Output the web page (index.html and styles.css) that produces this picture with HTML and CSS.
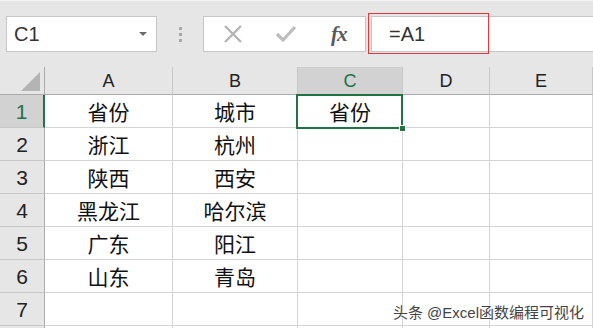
FILE: index.html
```html
<!DOCTYPE html>
<html lang="zh">
<head>
<meta charset="utf-8">
<link rel="stylesheet" href="styles.css">
</head>
<body>
<div class="app">
  <div class="toolbar">
    <div class="namebox">
      <span class="name">C1</span>
      <span class="caret"></span>
    </div>
    <div class="dots"><i></i><i></i><i></i></div>
    <div class="fnbox">
      <svg class="ic" width="20" height="20" viewBox="0 0 20 20"><path d="M2 2 L18 18 M18 2 L2 18" stroke="#b5b5b5" stroke-width="2.4" fill="none"/></svg>
      <svg class="ic" width="22" height="20" viewBox="0 0 22 20"><path d="M2 10 L8 16 L20 3" stroke="#bdbdbd" stroke-width="3.2" fill="none"/></svg>
      <span class="fx">fx</span>
    </div>
    <div class="formula">
      <div class="input">=A1</div>
      <div class="mark"></div>
    </div>
  </div>
  <div class="sheet">
    <div class="corner"><span class="tri"></span></div>
    <div class="ch">A</div><div class="ch">B</div><div class="ch sel">C</div><div class="ch">D</div><div class="ch">E</div>

    <div class="rh sel">1</div><div class="c">省份</div><div class="c">城市</div><div class="c active">省份<span class="handle"></span></div><div class="c"></div><div class="c"></div>
    <div class="rh">2</div><div class="c">浙江</div><div class="c">杭州</div><div class="c"></div><div class="c"></div><div class="c"></div>
    <div class="rh">3</div><div class="c">陕西</div><div class="c">西安</div><div class="c"></div><div class="c"></div><div class="c"></div>
    <div class="rh">4</div><div class="c">黑龙江</div><div class="c">哈尔滨</div><div class="c"></div><div class="c"></div><div class="c"></div>
    <div class="rh">5</div><div class="c">广东</div><div class="c">阳江</div><div class="c"></div><div class="c"></div><div class="c"></div>
    <div class="rh">6</div><div class="c">山东</div><div class="c">青岛</div><div class="c"></div><div class="c"></div><div class="c"></div>
    <div class="rh">7</div><div class="c"></div><div class="c"></div><div class="c"></div><div class="c"></div><div class="c"></div>
    <div class="rh"></div><div class="c"></div><div class="c"></div><div class="c"></div><div class="c"></div><div class="c"></div>
  </div>
  <div class="watermark">头条 @Excel函数编程可视化</div>
</div>
</body>
</html>
```

FILE: styles.css
```css
* { box-sizing: border-box; }
html, body { margin: 0; padding: 0; }
body {
  width: 593px;
  height: 328px;
  overflow: hidden;
  background: #e6e6e6;
  font-family: "Liberation Sans", "Noto Sans CJK SC", sans-serif;
}
.app {
  position: relative;
  width: 593px;
  height: 328px;
  overflow: hidden;
}
.toolbar {
  height: 67px;
  display: flex;
  align-items: flex-start;
  padding-top: 16px;
  padding-left: 6px;
  border-top: 1px solid #f2f2f2;
}
.namebox {
  width: 151px;
  height: 36px;
  margin-top: -1px;
  background: #fff;
  border: 1px solid #c6c6c6;
  display: flex;
  align-items: center;
  justify-content: space-between;
  padding: 0 9px 0 7px;
}
.name {
  font-size: 20px;
  color: #333;
}
.caret {
  width: 0; height: 0;
  border-left: 4px solid transparent;
  border-right: 4px solid transparent;
  border-top: 4px solid #6b6b6b;
}
.dots {
  width: 46px;
  height: 36px;
  margin-top: -1px;
  display: flex;
  flex-direction: column;
  align-items: center;
  justify-content: center;
  gap: 3px;
}
.dots i {
  width: 3px; height: 3px;
  background: #a8a8a8;
}
.fnbox {
  width: 163px;
  height: 36px;
  margin-top: -1px;
  background: #fff;
  border: 1px solid #c6c6c6;
  display: flex;
  align-items: center;
  padding-left: 19px;
}
.fnbox .ic { margin-right: 32px; }
.fnbox .ic + .ic { margin-right: 34px; }
.fx {
  font-family: "Liberation Serif", serif;
  font-style: italic;
  font-weight: bold;
  font-size: 21px;
  color: #5a5a5a;
  letter-spacing: -1px;
}
.formula {
  position: relative;
  flex: 1;
  height: 36px;
  margin-top: -1px;
  margin-left: 5px;
}
.input {
  height: 36px;
  background: #fff;
  border: 1px solid #c6c6c6;
  border-right: none;
  padding-left: 17px;
  font-size: 20px;
  line-height: 34px;
  color: #333;
}
.mark {
  position: absolute;
  left: -3px;
  top: -3px;
  width: 121px;
  height: 41px;
  border: 1px solid #e0383b;
}
.sheet {
  display: grid;
  grid-template-columns: 45px 128px 125px 105px 87px 1fr;
  grid-template-rows: 28px repeat(8, 33px);
  background: #fff;
}
.corner {
  background: #e6e6e6;
  border-right: 1px solid #ababab;
  border-bottom: 1px solid #ababab;
  position: relative;
}
.tri {
  position: absolute;
  left: 21px;
  top: 5px;
  width: 0; height: 0;
  border-left: 19px solid transparent;
  border-bottom: 19px solid #b4b4b4;
}
.ch {
  background: #e6e6e6;
  border-right: 1px solid #c8c8c8;
  border-bottom: 1px solid #ababab;
  display: flex;
  align-items: center;
  justify-content: center;
  font-size: 18px;
  color: #222;
  padding-top: 2px;
}
.ch.sel {
  background: #d2d2d2;
  color: #217346;
}
.rh {
  background: #e6e6e6;
  border-right: 1px solid #ababab;
  border-bottom: 1px solid #c8c8c8;
  display: flex;
  align-items: center;
  justify-content: center;
  font-size: 21px;
  color: #222;
  padding-top: 2px;
}
.rh.sel {
  background: #d2d2d2;
  color: #217346;
  border-right: 2px solid #217346;
}
.c {
  border-right: 1px solid #d4d4d4;
  border-bottom: 1px solid #d4d4d4;
  display: flex;
  align-items: center;
  justify-content: center;
  font-family: "Noto Sans CJK SC", sans-serif;
  font-size: 21px;
  color: #111;
  padding-top: 0;
}
.c.active {
  position: relative;
}
.c.active::after {
  content: "";
  position: absolute;
  left: -2px;
  top: -1px;
  right: -1px;
  bottom: -2px;
  border: 2px solid #217346;
}
.handle {
  position: absolute;
  right: -4px;
  bottom: -5px;
  width: 7px;
  height: 7px;
  background: #217346;
  border: 1px solid #fff;
  z-index: 2;
}
.watermark {
  position: absolute;
  right: 9px;
  bottom: 6px;
  font-family: "Liberation Sans", "Noto Sans CJK SC", sans-serif;
  font-size: 15px;
  color: #444;
  text-shadow: 0 0 2px #fff, 0 0 2px #fff;
}
```
